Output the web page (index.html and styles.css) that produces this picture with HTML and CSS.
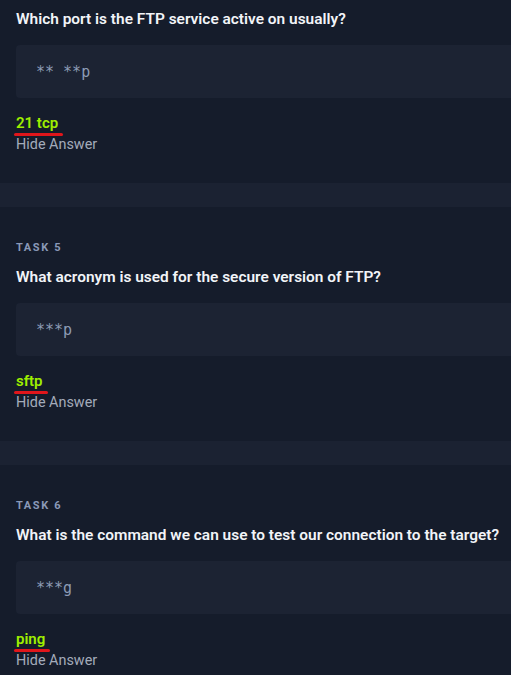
FILE: index.html
```html
<!DOCTYPE html>
<html>
<head>
<meta charset="utf-8">
<link rel="stylesheet" href="styles.css">
</head>
<body>
<div class="page">
  <section class="panel panel-first">
    <h3 class="question">Which port is the FTP service active on usually?</h3>
    <div class="answer-box"><span class="mask">**&nbsp;**p</span></div>
    <div class="answer"><span class="answer-text">21 tcp</span></div>
    <div class="hide">Hide Answer</div>
  </section>
  <div class="band"></div>
  <section class="panel">
    <div class="task-label">TASK 5</div>
    <h3 class="question">What acronym is used for the secure version of FTP?</h3>
    <div class="answer-box"><span class="mask">***p</span></div>
    <div class="answer"><span class="answer-text">sftp</span></div>
    <div class="hide">Hide Answer</div>
  </section>
  <div class="band"></div>
  <section class="panel">
    <div class="task-label">TASK 6</div>
    <h3 class="question">What is the command we can use to test our connection to the target?</h3>
    <div class="answer-box"><span class="mask">***g</span></div>
    <div class="answer"><span class="answer-text">ping</span></div>
    <div class="hide">Hide Answer</div>
  </section>
</div>
</body>
</html>
```
FILE: styles.css
```css
html, body {
  margin: 0;
  padding: 0;
  background: #151c2b;
  overflow: hidden;
}
.page {
  font-family: Roboto, "Liberation Sans", sans-serif;
  width: 511px;
  overflow: hidden;
}
.panel {
  background: #151c2b;
  padding: 34px 0 28px 16px;
}
.panel-first {
  padding-top: 8px;
}
.band {
  height: 24px;
  background: #1b2232;
}
.task-label {
  font-size: 11px;
  line-height: 14px;
  font-weight: 700;
  letter-spacing: 1.6px;
  color: #8a99b8;
  margin-bottom: 11px;
}
.question {
  margin: 0 0 15px 0;
  font-size: 15.45px;
  line-height: 22px;
  font-weight: 600;
  color: #f2f4f8;
  white-space: nowrap;
}
.answer-box {
  width: 700px;
  height: 53px;
  background: #1c2333;
  border-radius: 4px;
  display: flex;
  align-items: center;
  padding-left: 20px;
  box-sizing: border-box;
  margin-bottom: 15px;
}
.mask {
  font-family: "DejaVu Sans Mono", monospace;
  font-size: 15px;
  color: #8d9bb6;
}
.answer {
  line-height: 20px;
  font-size: 15px;
  font-weight: 600;
  color: #9fef00;
}
.answer-text {
  position: relative;
  display: inline-block;
}
.answer-text::after {
  content: "";
  position: absolute;
  left: -2px;
  right: -5px;
  bottom: -3px;
  height: 3px;
  border-radius: 2px;
  background: #e0161b;
}
.hide {
  line-height: 20px;
  font-size: 14.4px;
  color: #a3abba;
  margin-top: 2px;
}
```
